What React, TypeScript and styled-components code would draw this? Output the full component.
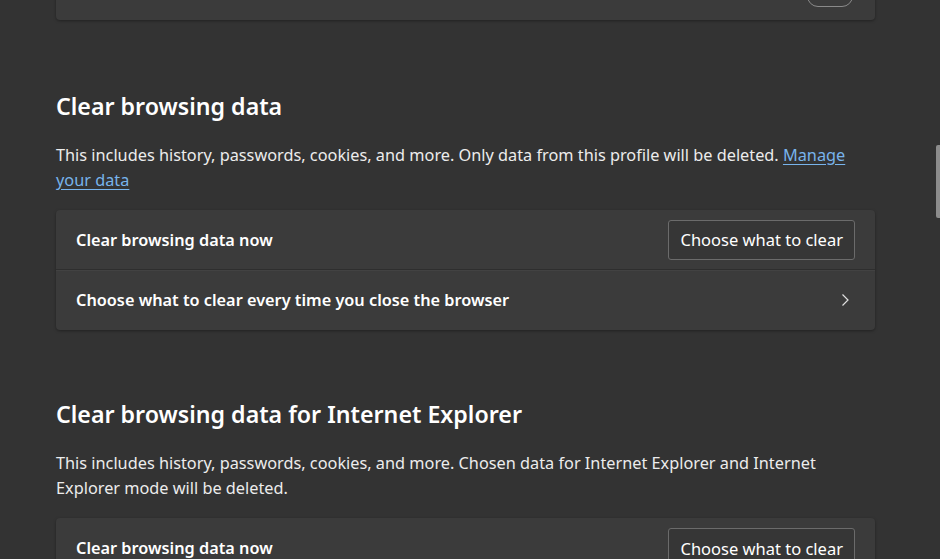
import * as React from "react";
import styled, { createGlobalStyle } from "styled-components";

const GlobalStyle = createGlobalStyle`
	html, body {
		margin: 0;
		padding: 0;
		background: #333333;
		overflow: hidden;
	}
	body {
		font-family: "Noto Sans", "Open Sans", sans-serif;
		color: #ffffff;
	}
`;

const Page = styled.div`
	position: relative;
	width: 940px;
	height: 559px;
	overflow: hidden;
`;

const Content = styled.div`
	display: flex;
	flex-direction: column;
	width: 819px;
	margin-left: 56px;
	margin-top: -40px;
`;

const Card = styled.div`
	display: flex;
	flex-direction: column;
	background: #3b3b3b;
	border-radius: 4px;
	box-shadow: 0 1px 3px rgba(0, 0, 0, 0.35);
`;

const Row = styled.div<{ $divider?: boolean }>`
	display: flex;
	align-items: center;
	justify-content: space-between;
	height: 59px;
	padding: 0 20px;
	border-bottom: ${({ $divider }) => ($divider ? "1px solid #2e2e2e" : "none")};
	box-shadow: ${({ $divider }) => ($divider ? "0 1px 0 #424242" : "none")};
	&:last-child {
		height: 60px;
	}
`;

const RowLabel = styled.span`
	font-size: 16.3px;
	font-weight: 600;
	color: #ffffff;
`;

const Section = styled.section<{ $gap: number }>`
	display: flex;
	flex-direction: column;
	padding-top: ${({ $gap }) => $gap}px;
`;

const Title = styled.h2`
	margin: 0;
	font-size: 23.2px;
	font-weight: 600;
	line-height: 36px;
	color: #ffffff;
`;

const Description = styled.p`
	margin: 19px 0 17.5px;
	font-size: 16.3px;
	line-height: 25px;
	color: #ececec;
`;

const Link = styled.a`
	color: #78b4ec;
	text-decoration: underline;
	text-underline-offset: 3px;
	cursor: pointer;
`;

const OutlineButton = styled.button`
	height: 40px;
	padding: 0 11px;
	background: #363636;
	border: 1px solid #6b6b6b;
	border-radius: 3px;
	font-family: inherit;
	font-size: 16.5px;
	color: #ffffff;
	cursor: pointer;
`;

const Toggle = styled.span`
	display: inline-block;
	width: 44px;
	height: 20px;
	border: 1px solid #8a8a8a;
	border-radius: 11px;
	margin-top: 12px;
	margin-right: 2px;
`;

const Chevron = styled.svg`
	width: 16px;
	height: 16px;
	margin-right: 2px;
`;

const ScrollThumb = styled.div`
	position: absolute;
	right: 0;
	top: 145px;
	width: 4px;
	height: 73px;
	border-radius: 2px 0 0 2px;
	background: #8c8c8c;
`;

export default function App() {
	return (
		<Page>
			<GlobalStyle />
			<Content>
				<Card>
					<Row>
						<RowLabel>Always use "Strict" tracking prevention when browsing InPrivate</RowLabel>
						<Toggle />
					</Row>
				</Card>

				<Section $gap={67.5}>
					<Title>Clear browsing data</Title>
					<Description>
						This includes history, passwords, cookies, and more. Only data from this profile will be deleted.{" "}
						<Link>Manage your data</Link>
					</Description>
					<Card>
						<Row $divider>
							<RowLabel>Clear browsing data now</RowLabel>
							<OutlineButton>Choose what to clear</OutlineButton>
						</Row>
						<Row>
							<RowLabel>Choose what to clear every time you close the browser</RowLabel>
							<Chevron viewBox="0 0 16 16">
								<path d="M5.5 2.5 L11 8 L5.5 13.5" fill="none" stroke="#e0e0e0" strokeWidth="1.2" />
							</Chevron>
						</Row>
					</Card>
				</Section>

				<Section $gap={65.5}>
					<Title>Clear browsing data for Internet Explorer</Title>
					<Description>
						This includes history, passwords, cookies, and more. Chosen data for Internet Explorer and Internet
						Explorer mode will be deleted.
					</Description>
					<Card>
						<Row $divider>
							<RowLabel>Clear browsing data now</RowLabel>
							<OutlineButton>Choose what to clear</OutlineButton>
						</Row>
					</Card>
				</Section>
			</Content>
			<ScrollThumb />
		</Page>
	);
}
